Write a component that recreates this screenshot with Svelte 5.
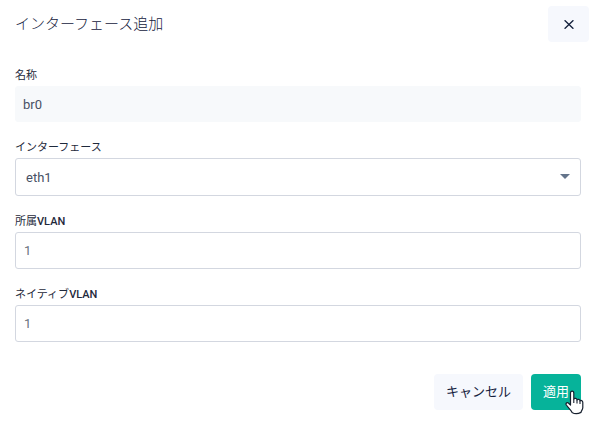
<script>
  let name = $state('br0');
  let iface = $state('eth1');
  let vlan = $state('1');
  let nativeVlan = $state('1');
</script>

<form class="dialog" onsubmit={(e) => e.preventDefault()}>
  <header>
    <h1>インターフェース追加</h1>
    <button type="button" class="close" aria-label="閉じる">
      <svg width="10" height="9" viewBox="0 0 10 9" aria-hidden="true">
        <path d="M0.6 0.3 9.4 8.7M9.4 0.3 0.6 8.7" fill="none" stroke="#14213d" stroke-width="1.4" />
      </svg>
    </button>
  </header>

  <div class="fields">
    <div class="field">
      <label for="name">名称</label>
      <input id="name" class="readonly" type="text" readonly bind:value={name} />
    </div>
    <div class="field">
      <label for="iface">インターフェース</label>
      <div class="select">
        <select id="iface" bind:value={iface}>
          <option value="eth1">eth1</option>
        </select>
        <svg width="10" height="5" viewBox="0 0 10 5" aria-hidden="true">
          <path d="M0 0H10L5 5Z" fill="#64748b" />
        </svg>
      </div>
    </div>
    <div class="field">
      <label for="vlan">所属<span>VLAN</span></label>
      <input id="vlan" type="text" bind:value={vlan} />
    </div>
    <div class="field">
      <label for="native">ネイティブ<span>VLAN</span></label>
      <input id="native" type="text" bind:value={nativeVlan} />
    </div>
  </div>

  <footer>
    <button type="button" class="cancel">キャンセル</button>
    <div class="apply-wrap">
      <button type="submit" class="apply">適用</button>
      <svg class="pointer" width="19" height="25" viewBox="0 0 19 25" aria-hidden="true">
        <path
          d="M5.5 15V3.2C5.5 0.5 8.8 0.5 8.8 3.2V9C9.5 7.9 12 8.2 12 10C12.8 8.8 15 9.2 15 11C15.8 10 17.8 10.5 17.8 12.5V17.5C17.8 19.5 16.2 20.8 16 22.4C13 24 9.5 24 7 22.4C6.5 20.5 2.5 17 1.2 14.8C0.4 13 2.4 12 3.6 13.2Z"
          fill="#fff" stroke="#17202e" stroke-width="1.2" stroke-linejoin="round"
        />
        <path d="M8.8 9V13M12 10V13.5M15 11V14" fill="none" stroke="#17202e" stroke-width="1.1" />
      </svg>
    </div>
  </footer>
</form>

<style>
  :global(body) {
    margin: 0;
    background: #fff;
  }
  .dialog {
    font-family: Roboto, 'Noto Sans CJK JP', sans-serif;
    color: #1e293b;
    padding: 6px 13px 15px 15px;
  }
  header {
    display: flex;
    justify-content: space-between;
    align-items: center;
    margin-right: -8px;
  }
  h1 {
    margin: 0;
    font-size: 15px;
    line-height: 20px;
    font-weight: 300;
    color: #14213d;
  }
  button {
    font-family: inherit;
    font-size: 13px;
    line-height: 20px;
    height: 36px;
    padding: 0 12px;
    border: 0;
    border-radius: 4px;
    background: #f6f8fd;
    color: #14213d;
  }
  .close {
    display: flex;
    align-items: center;
    justify-content: center;
    width: 41px;
  }
  .fields {
    display: flex;
    flex-direction: column;
    gap: 18px;
    margin-top: 26px;
  }
  .field {
    display: flex;
    flex-direction: column;
    gap: 2px;
  }
  label {
    font-size: 11px;
    line-height: 16px;
    font-weight: 400;
  }
  label span {
    font-weight: 500;
  }
  input,
  select {
    box-sizing: border-box;
    width: 100%;
    height: 37px;
    padding: 0 8px;
    border: 1px solid #d3d7e0;
    border-radius: 3px;
    background: #fff;
    font-family: inherit;
    font-size: 13px;
    color: #6b7280;
  }
  .readonly {
    height: 36px;
    padding: 0 7px;
    border-color: #f7f9fb;
    background: #f7f9fb;
    color: #475064;
  }
  .select {
    position: relative;
  }
  select {
    display: block;
    appearance: none;
    height: 38px;
    padding: 0 10px;
    color: #475064;
  }
  .select svg {
    position: absolute;
    right: 11px;
    top: 16px;
    pointer-events: none;
  }
  footer {
    display: flex;
    justify-content: flex-end;
    gap: 8px;
    margin-top: 32px;
  }
  .apply-wrap {
    position: relative;
  }
  .apply {
    background: #06b39a;
    color: #fff;
  }
  .pointer {
    position: absolute;
    left: 34px;
    top: 16px;
    pointer-events: none;
  }
</style>
